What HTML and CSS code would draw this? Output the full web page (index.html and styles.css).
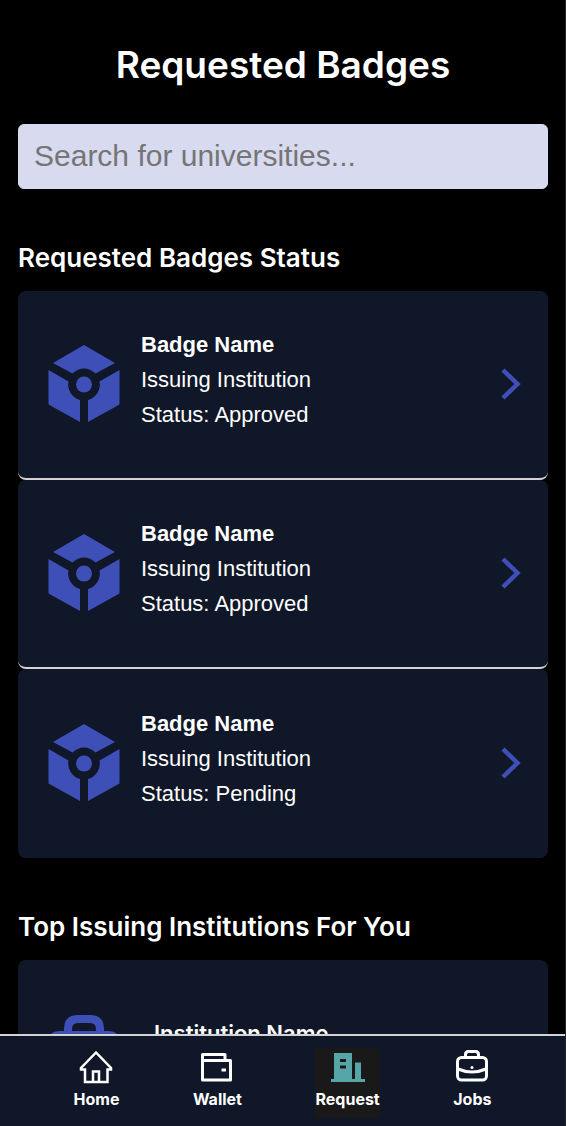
FILE: index.html
```
<!DOCTYPE html>
<html lang="en">
<head>
<meta charset="utf-8">
<meta name="viewport" content="width=device-width, initial-scale=1">
<title>Requested Badges</title>
<link rel="stylesheet" href="styles.css">
</head>
<body>
<svg class="defs" aria-hidden="true">
  <symbol id="badge" viewBox="0 0 72 78">
    <path d="M36 0 67 18 47.500 28.500A16 16 0 0 0 24.500 28.500L5 18Z"/>
    <path d="M0.500 25 20.500 36.500A16 16 0 0 0 32 55V77L0.500 59.500Z"/>
    <path d="M71.500 25 51.500 36.500A16 16 0 0 1 40 55V77L71.500 59.500Z"/>
    <circle cx="36" cy="39.500" r="8"/>
  </symbol>
  <symbol id="chevron" viewBox="0 0 20 32">
    <path d="M2 2 16.500 16 2 30" fill="none" stroke="currentColor" stroke-width="4.500"/>
  </symbol>
</svg>
<main class="page">
  <h1 class="title">Requested Badges</h1>
  <input class="search" type="search" aria-label="Search for universities" placeholder="Search for universities...">
  <section class="section">
    <h2 class="heading">Requested Badges Status</h2>
    <ul class="list">
      <li class="card">
        <svg class="card-icon" aria-hidden="true"><use href="#badge"/></svg>
        <div class="details"><h3 class="name">Badge Name</h3><p>Issuing Institution</p><p>Status: Approved</p></div>
        <button class="open" aria-label="Open badge"><svg class="chevron"><use href="#chevron"/></svg></button>
      </li>
      <li class="card">
        <svg class="card-icon" aria-hidden="true"><use href="#badge"/></svg>
        <div class="details"><h3 class="name">Badge Name</h3><p>Issuing Institution</p><p>Status: Approved</p></div>
        <button class="open" aria-label="Open badge"><svg class="chevron"><use href="#chevron"/></svg></button>
      </li>
      <li class="card">
        <svg class="card-icon" aria-hidden="true"><use href="#badge"/></svg>
        <div class="details"><h3 class="name">Badge Name</h3><p>Issuing Institution</p><p>Status: Pending</p></div>
        <button class="open" aria-label="Open badge"><svg class="chevron"><use href="#chevron"/></svg></button>
      </li>
    </ul>
  </section>
  <section class="section">
    <h2 class="heading">Top Issuing Institutions For You</h2>
    <ul class="list">
      <li class="card institution">
        <svg class="card-icon" viewBox="0 0 72 78" fill="none" stroke="currentColor" stroke-width="8" aria-hidden="true">
          <path d="M20 20V14Q20 4 30 4H42Q52 4 52 14V20M12 20H60Q68 20 68 28V66Q68 74 60 74H12Q4 74 4 66V28Q4 20 12 20ZM4 42Q36 58 68 42"/>
        </svg>
        <div class="details"><h3 class="name">Institution Name</h3></div>
      </li>
    </ul>
  </section>
</main>
<nav class="nav" aria-label="Main">
  <a class="tab" href="#home">
    <svg class="tab-icon" viewBox="0 0 36 36" fill="none" stroke="currentColor" stroke-width="2.500" aria-hidden="true">
      <path d="M18 4.500 3 20V21.500H7V34H29.500V21.500H33V20ZM15 34V23.500H21V34"/>
    </svg>Home</a>
  <a class="tab" href="#wallet">
    <svg class="tab-icon" viewBox="0 0 36 36" fill="none" stroke="currentColor" stroke-width="3" stroke-linejoin="round" aria-hidden="true">
      <path d="M3.500 12.500H31.500V32H3.500ZM3.500 12.500V6.500H26V12.500"/><path d="M22.500 22H27"/>
    </svg>Wallet</a>
  <a class="tab active" href="#request" aria-current="page">
    <svg class="tab-icon" viewBox="0 0 36 36" aria-hidden="true">
      <path fill="currentColor" fill-rule="evenodd" d="M1 31H4V5H22V31H25V14.500H31V31H35V34H1ZM10 11V14H16V11ZM10 17.500V20.500H16V17.500Z"/>
    </svg><span class="tab-text">Request</span></a>
  <a class="tab" href="#jobs">
    <svg class="tab-icon" viewBox="0 0 36 36" fill="none" stroke="currentColor" stroke-width="3" aria-hidden="true">
      <rect x="3.500" y="9.500" width="29" height="22.500" rx="4"/>
      <path d="M11.500 9V6.500Q11.500 3.500 14.500 3.500H21.500Q24.500 3.500 24.500 6.500V9M4 21Q18 27 32 21"/>
      <circle cx="18" cy="19.500" r="1.500" fill="currentColor" stroke="none"/>
    </svg>Jobs</a>
</nav>
</body>
</html>
```
FILE: styles.css
```
* { box-sizing: border-box; }
html { scrollbar-width: none; background: #000; }
body {
  margin: 0;
  border-right: 1px solid #242424;
  background: #000;
  color: #fff;
  font-family: Inter, sans-serif;
}
h1, h2, h3, p, ul { margin: 0; padding: 0; }
.defs { display: none; }
.page { padding: 40px 17px 96px 18px; }
.title {
  font-size: 37px;
  line-height: 50px;
  font-weight: 600;
  text-align: center;
}
.search {
  display: block;
  width: 100%;
  height: 65px;
  margin-top: 34px;
  padding: 0 15px 2px;
  border: 1px solid #d8daef;
  border-radius: 6px;
  background: #d8daef;
  color: #222;
  font: 30px "Liberation Sans", Arial, sans-serif;
  appearance: none;
}
.search::placeholder { color: #757575; opacity: 1; }
.section { margin-top: 52px; }
.heading {
  margin-bottom: 17px;
  font-size: 26px;
  line-height: 33px;
  font-weight: 600;
}
.list { list-style: none; }
.card {
  display: flex;
  align-items: center;
  min-height: 189px;
  padding: 0 27px 2px 30px;
  border-bottom: 2px solid #d3d3d3;
  border-radius: 8px;
  background: #101728;
}
.card:last-child { border-bottom: 0; }
.card-icon {
  flex: none;
  width: 72px;
  height: 78px;
  color: #3f4fb8;
  fill: currentColor;
}
.details {
  flex: 1;
  margin-left: 21px;
  padding-bottom: 8px;
  font: 22px/35px "Liberation Sans", Arial, sans-serif;
}
.name { font-size: 22px; line-height: 35px; font-weight: 700; }
.open {
  padding: 0;
  border: 0;
  background: none;
  color: #3f4fb8;
  cursor: pointer;
}
.chevron { display: block; width: 20px; height: 32px; }
.institution .card-icon { fill: none; }
.institution .details { margin-left: 34px; padding-bottom: 40px; }
.institution .name { font-family: Inter, sans-serif; font-weight: 600; }
.nav {
  position: fixed;
  inset: auto 1px 0 0;
  display: flex;
  justify-content: space-evenly;
  padding: 12px 0 8px;
  border-top: 2px solid #d3d3d3;
  background: #101728;
}
.tab {
  display: flex;
  flex-direction: column;
  align-items: center;
  height: 70px;
  color: #fff;
  font-size: 16px;
  line-height: 28px;
  font-weight: 700;
  text-decoration: none;
}
.tab-icon { width: 36px; height: 36px; margin-bottom: 1px; }
.active { background: #191919; color: #56a5a7; }
.tab-text { color: #fff; }
```
